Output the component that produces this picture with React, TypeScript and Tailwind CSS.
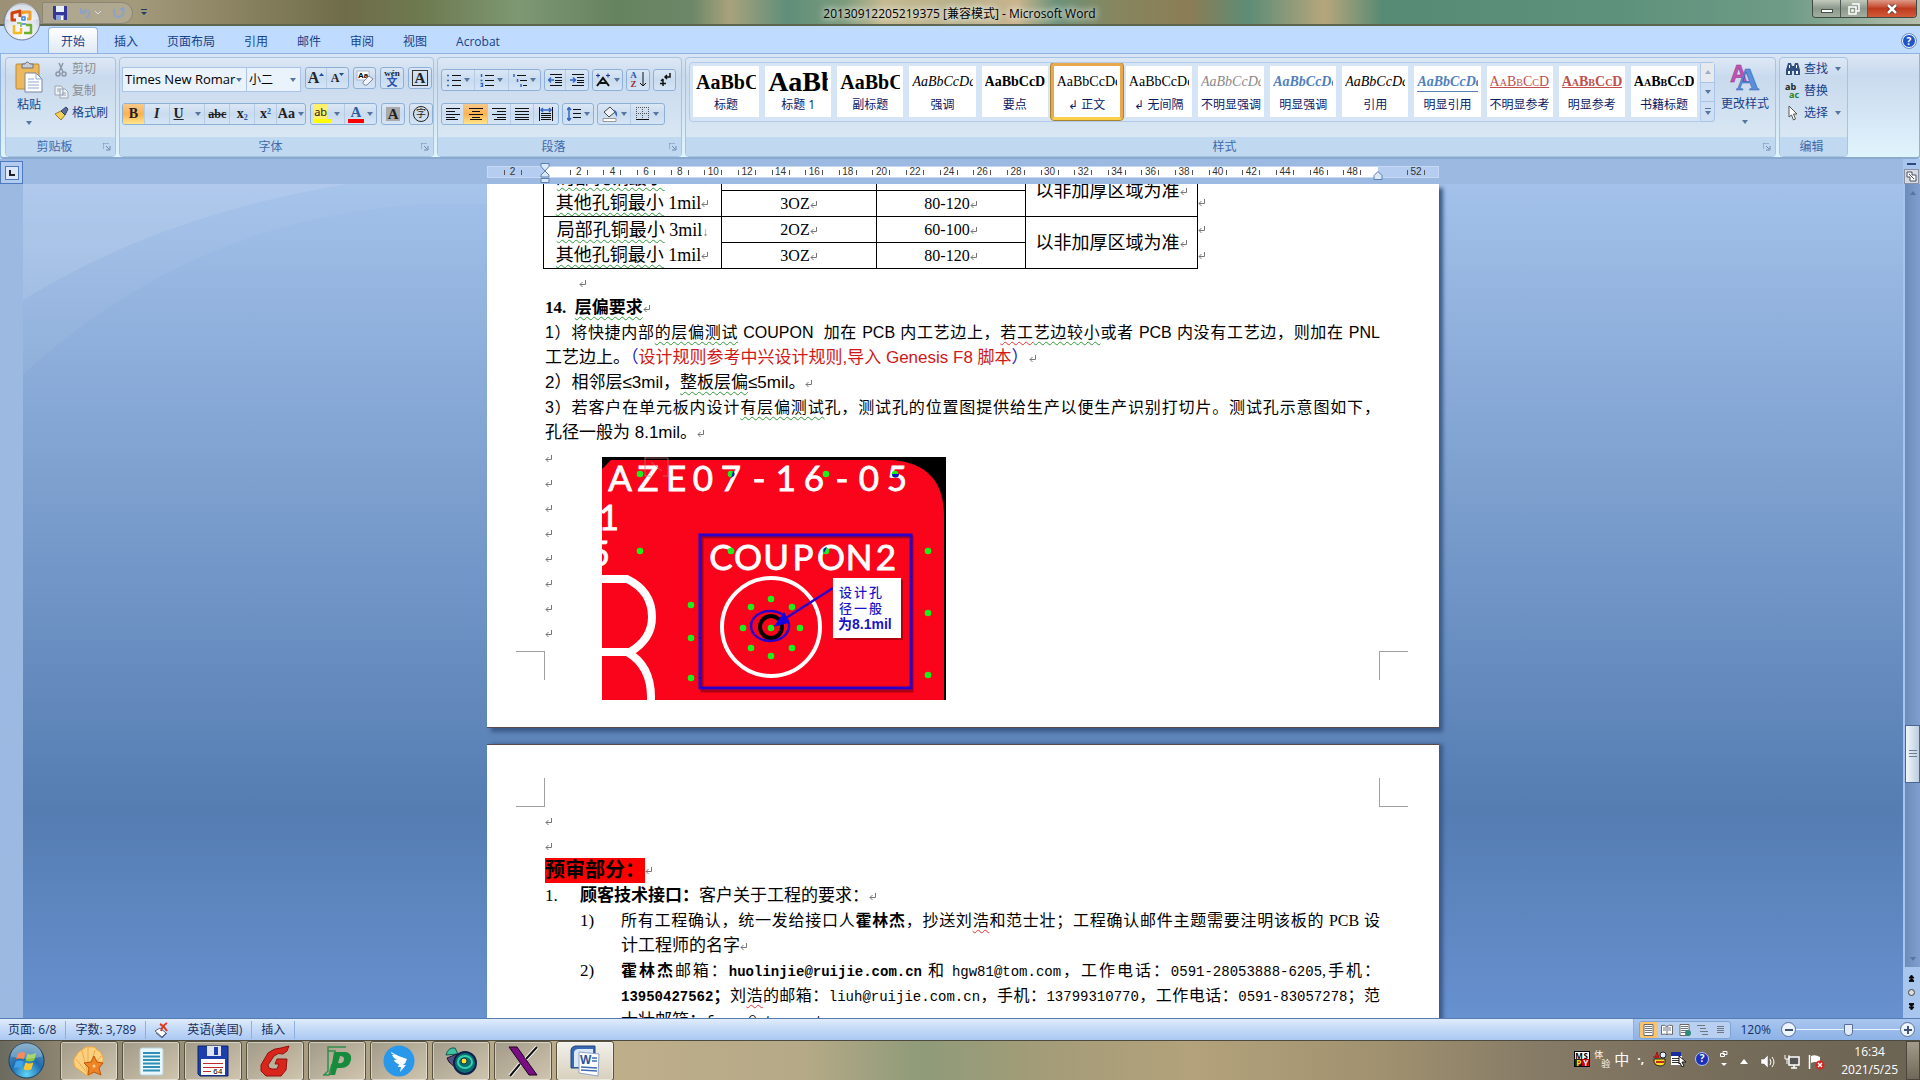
import { useState } from "react";
import type { ReactNode } from "react";
import clsx from "clsx";

const tabs = ["开始", "插入", "页面布局", "引用", "邮件", "审阅", "视图", "Acrobat"];

const styleItems = [
  { name: "标题", sample: "AaBbC", cls: "text-xl font-bold text-black" },
  { name: "标题 1", sample: "AaBb", cls: "text-[28px] font-bold text-black" },
  { name: "副标题", sample: "AaBbC", cls: "text-xl font-bold text-black" },
  { name: "强调", sample: "AaBbCcDd", cls: "text-sm italic text-black" },
  { name: "要点", sample: "AaBbCcD", cls: "text-sm font-bold text-black" },
  { name: "↲ 正文", sample: "AaBbCcDd", cls: "text-sm text-black" },
  { name: "↲ 无间隔", sample: "AaBbCcDd", cls: "text-sm text-black" },
  { name: "不明显强调", sample: "AaBbCcDd", cls: "text-sm italic text-[#8a8a8a]" },
  { name: "明显强调", sample: "AaBbCcDd", cls: "text-sm italic font-bold text-[#4f81bd]" },
  { name: "引用", sample: "AaBbCcDd", cls: "text-sm italic text-black" },
  { name: "明显引用", sample: "AaBbCcDd", cls: "text-sm italic font-bold text-[#4f81bd] border-b border-[#4f81bd]" },
  { name: "不明显参考", sample: "AaBbCcD", cls: "text-sm text-[#c0504d] underline [font-variant:small-caps]" },
  { name: "明显参考", sample: "AaBbCcD", cls: "text-sm font-bold text-[#c0504d] underline [font-variant:small-caps]" },
  { name: "书籍标题", sample: "AaBbCcD", cls: "text-sm font-bold text-black [font-variant:small-caps]" },
];

const rulerNumbers = Array.from({ length: 24 }, (_, i) => (i + 1) * 2);

function Caret({ className }: { className?: string }) {
  return (
    <svg viewBox="0 0 6 4" className={clsx("h-1 w-[6px] shrink-0", className)}>
      <path d="M0 0h6L3 4z" fill="#56759f" />
    </svg>
  );
}

function Mark() {
  return (
    <svg viewBox="0 0 8 8" className="inline-block size-2 shrink-0">
      <path d="M6.5 0v4.5H1M3.5 2L1 4.5 3.5 7" fill="none" stroke="#777" />
    </svg>
  );
}

/* ---------- Title bar ---------- */

function OfficeOrb() {
  return (
    <button aria-label="Office" className="absolute left-[3px] top-[3px] z-10 size-[38px] rounded-full">
      <svg viewBox="0 0 38 38" className="size-full">
        <defs>
          <radialGradient id="orb" cx="50%" cy="80%" r="80%">
            <stop offset="0" stopColor="#fff" />
            <stop offset="0.55" stopColor="#dfe5ee" />
            <stop offset="1" stopColor="#a9b7cc" />
          </radialGradient>
        </defs>
        <circle cx="19" cy="19" r="18" fill="url(#orb)" stroke="#6c7a90" />
        <path d="M3 16a16 16 0 0 1 32 0q-16 6-32 0z" fill="#fff" opacity="0.5" />
        <g fill="none" strokeWidth="2.5" strokeLinejoin="round">
          <path d="M13 17H9V10l8-2v6" stroke="#d2410e" strokeWidth="3" />
          <path d="M20 11v-2h7v7h-3" stroke="#f0a02a" strokeWidth="3" />
          <path d="M11 22v8h7v-5" stroke="#f5b921" />
          <path d="M21 30h7v-8h-5" stroke="#6fae2e" />
          <path d="M19 14h3v3h-3zM19 21h4" stroke="#3c86d8" strokeWidth="1.5" />
          <path d="M14 20h4v4" stroke="#7ab32f" strokeWidth="1.5" />
        </g>
      </svg>
    </button>
  );
}

function SaveIcon() {
  return (
    <svg viewBox="0 0 14 14" className="size-[14px]">
      <path d="M0 0h14v14H2L0 12z" fill="#35359b" />
      <path d="M3 0h8v6H3z" fill="#e8f1fb" />
      <path d="M3 9h8v5H3z" fill="#8f9fd8" />
      <path d="M8 10h2v4H8z" fill="#fff" />
    </svg>
  );
}

function TitleBar() {
  return (
    <header className="flex h-[26px] shrink-0 items-start border-b-2 border-[#5d6450] bg-[linear-gradient(90deg,#9c9076_0%,#a39a7c_7%,#8c8462_12%,#6f6c4a_18%,#6e7a50_22%,#7d9873_27%,#66835f_32%,#6b8767_36%,#a8a27c_38%,#5f8e7a_41%,#7c9b7c_44%,#c5b990_46%,#b6b08a_50%,#c9b48d_53%,#6b9279_55%,#86865f_58%,#8b7d55_62%,#5c8c76_65%,#b7a67c_69%,#578a74_72%,#5f927c_85%,#6e9b86_93%,#b5bfae_100%)]">
      <div className="ml-[42px] mt-[2px] flex h-[22px] w-[91px] items-center gap-3 rounded-r-full border border-[#8b8774] bg-[#b9b29c]/60 pl-[10px]">
        <button aria-label="保存">
          <SaveIcon />
        </button>
        <button aria-label="撤消" className="flex items-center gap-1">
          <svg viewBox="0 0 12 12" className="size-3">
            <path d="M2 1v5h5M2 6q5-5 8-1 1 4-3 6" fill="none" stroke="#8fa2c4" strokeWidth="2" />
          </svg>
          <svg viewBox="0 0 6 4" className="h-1 w-[6px]">
            <path d="M0 0l3 3 3-3" fill="none" stroke="#dfe2e6" />
          </svg>
        </button>
        <button aria-label="恢复">
          <svg viewBox="0 0 12 12" className="size-3">
            <path d="M2 2q-3 8 4 8 6-1 4-8M7 3l3-2 2 3" fill="none" stroke="#8fa2c4" strokeWidth="2" />
          </svg>
        </button>
      </div>
      <button aria-label="自定义快速访问工具栏" className="ml-2 mt-[9px]">
        <svg viewBox="0 0 6 7" className="h-[7px] w-[6px]">
          <path d="M0 0h6v1H0zM0 3h6L3 6z" fill="#20406b" />
        </svg>
      </button>
      <h1 className="flex-1 pr-10 pt-[5px] text-center text-xs leading-[18px] text-black [text-shadow:0_0_6px_#fff,0_0_10px_#fff]">
        20130912205219375 [兼容模式] - Microsoft Word
      </h1>
      <div className="mr-[3px] flex h-[18px] overflow-hidden rounded-b border border-t-0 border-[#3e4a44] text-white">
        <button aria-label="最小化" className="flex w-7 items-end justify-center border-r border-[#4d5a52] bg-linear-to-b from-[#c2cabd] via-[#8b988b] to-[#a4ae9f] pb-1">
          <span className="h-1 w-3 border border-[#45514b] bg-white"></span>
        </button>
        <button aria-label="还原" className="flex w-[27px] items-center justify-center border-r border-[#4d5a52] bg-linear-to-b from-[#c2cabd] via-[#8b988b] to-[#a4ae9f]">
          <svg viewBox="0 0 12 12" className="size-3">
            <path d="M4 1h7v7H8M1 4h7v7H1zM4 7h1v1H4z" fill="none" stroke="#fff" strokeWidth="1.5" />
          </svg>
        </button>
        <button aria-label="关闭" className="flex w-12 items-center justify-center bg-linear-to-b from-[#dd9a87] via-[#bf3a1e] to-[#d35a38]">
          <svg viewBox="0 0 12 10" className="h-[10px] w-3">
            <path d="M2 1l8 8M10 1L2 9" stroke="#4b2a22" strokeWidth="4" />
            <path d="M2 1l8 8M10 1L2 9" stroke="#fff" strokeWidth="2.5" />
          </svg>
        </button>
      </div>
    </header>
  );
}

function TabRow({ active, onSelect }: { active: string; onSelect: (t: string) => void }) {
  return (
    <nav className="flex h-[27px] shrink-0 items-end bg-[#bfdbff] pl-[48px] pr-1">
      {tabs.map((tab) => (
        <button
          key={tab}
          onClick={() => onSelect(tab)}
          className={clsx(
            "mr-[3px] h-[26px] rounded-t border border-b-0 px-3 pt-[2px] text-xs leading-5 text-[#15428b]",
            tab === active ? "border-[#8db2e3] bg-linear-to-b from-white to-[#dfe9f5]" : "border-transparent",
          )}
        >
          {tab}
        </button>
      ))}
      <button aria-label="帮助" className="mb-[5px] ml-auto flex size-[14px] items-center justify-center rounded-full border border-white bg-[#1f55c4] text-[10px] font-bold text-white outline outline-[#6c8fc7]">
        ?
      </button>
    </nav>
  );
}

/* ---------- Ribbon ---------- */

function Group({ title, launcher, className, children }: { title: string; launcher?: boolean; className?: string; children: ReactNode }) {
  return (
    <section
      className={clsx(
        "flex h-[100px] flex-col overflow-hidden rounded border border-[#a5c3e3] bg-linear-to-b from-[#dde8f5] from-0% via-[#c9daee] via-20% to-[#d9e7f3] to-80%",
        className,
      )}
    >
      <div className="min-h-0 flex-1">{children}</div>
      <div className="flex h-[19px] items-center bg-[#c1d9f0] pr-1 text-xs text-[#3e6aaa]">
        <h2 className="flex-1 text-center">{title}</h2>
        {launcher && (
          <button aria-label={title + "选项"}>
            <svg viewBox="0 0 8 8" className="size-2">
              <path d="M0 6V0h6M3 3l3 3M7 3v4H3" fill="none" stroke="#6c89ad" />
            </svg>
          </button>
        )}
      </div>
    </section>
  );
}

function ButtonBox({ children }: { children: ReactNode }) {
  return (
    <div className="flex h-[22px] divide-x divide-[#b5cbe6] overflow-hidden rounded-[3px] border border-[#8fb0d6] bg-linear-to-b from-[#dbe7f5] via-[#c9dbef] to-[#d5e5f6]">
      {children}
    </div>
  );
}

function Tool({ label, caret, on, className, children }: { label: string; caret?: boolean; on?: boolean; className: string; children: ReactNode }) {
  return (
    <button
      aria-label={label}
      className={clsx(
        "flex items-center justify-center font-['Liberation_Serif','Noto_Sans_CJK_SC',serif] text-[#222]",
        on && "bg-linear-to-b from-[#f8c98a] via-[#fbb24e] to-[#ffe58a]",
        className,
      )}
    >
      {children}
      {caret && <Caret className="ml-[3px]" />}
    </button>
  );
}

function ClipboardGroup() {
  return (
    <Group title="剪贴板" launcher className="w-[111px]">
      <div className="flex pl-[6px]">
        <button className="flex w-[34px] flex-col items-center pt-[3px] text-xs text-[#15428b]">
          <svg viewBox="0 0 28 32" className="h-8 w-7">
            <rect x="1" y="3" width="23" height="25" rx="1" fill="#edb85a" stroke="#b98a3c" />
            <path d="M7 3h3q2-4 5 0h3v4H7z" fill="#c9ccd2" stroke="#6f7278" />
            <path d="M10 12h11l6 6v13H10z" fill="#fff" stroke="#7787a0" />
            <path d="M21 12v6h6M13 18h6M13 21h11M13 24h11M13 27h11" fill="none" stroke="#8fa9cf" />
          </svg>
          <span className="mt-1 leading-4">粘贴</span>
          <Caret className="mt-2" />
        </button>
        <div className="ml-2 flex flex-col text-xs leading-[22px]">
          <button className="flex items-center gap-[3px] text-[#8d8d8d]">
            <svg viewBox="0 0 15 15" className="size-[15px]">
              <path d="M5 1l4 9M9 1L5 10" stroke="#8b97a8" strokeWidth="1.5" />
              <circle cx="4" cy="12" r="2" fill="none" stroke="#8b97a8" strokeWidth="1.5" />
              <circle cx="10" cy="12" r="2" fill="none" stroke="#8b97a8" strokeWidth="1.5" />
            </svg>
            剪切
          </button>
          <button className="flex items-center gap-[3px] text-[#8d8d8d]">
            <svg viewBox="0 0 15 15" className="size-[15px]">
              <path d="M1 2h6l2 2v7H1zM6 5h5l3 3v6H6z" fill="#eef1f5" stroke="#9aa5b5" />
              <path d="M3 5h3M3 7h3M8 9h4M8 11h4" stroke="#9aa5b5" />
            </svg>
            复制
          </button>
          <button className="flex items-center gap-[3px] text-[#15428b]">
            <svg viewBox="0 0 15 15" className="size-[15px]">
              <path d="M1 8l6-3 4 4-4 5z" fill="#f2cf57" stroke="#9a7b2a" />
              <path d="M7 5l4 4 3-6-2-2z" fill="#5b6c97" stroke="#33406a" />
            </svg>
            格式刷
          </button>
        </div>
      </div>
    </Group>
  );
}

function FontGroup() {
  return (
    <Group title="字体" launcher className="w-[315px]">
      <div className="flex flex-col gap-[11px] pl-[2px] pt-[9px]">
        <div className="flex h-[25px] items-start">
          <div className="flex h-[25px] w-[125px] items-center border border-[#a9c4e6] bg-[#eaf2fb] pr-1">
            <input aria-label="字体" defaultValue="Times New Romar" className="w-full min-w-0 pl-[2px] text-[13px] outline-none" />
            <Caret />
          </div>
          <div className="flex h-[25px] w-[54px] items-center border border-l-0 border-[#a9c4e6] bg-[#eaf2fb] pr-1">
            <input aria-label="字号" defaultValue="小二" className="w-full min-w-0 pl-[2px] text-xs outline-none" />
            <Caret />
          </div>
          <div className="ml-1 flex gap-1">
            <ButtonBox>
              <Tool label="增大字体" className="w-[21px] text-base font-bold">
                A
                <svg viewBox="0 0 5 3" className="mb-2 h-[3px] w-[5px]">
                  <path d="M0 3h5L2.500 0z" fill="#1f4e9e" />
                </svg>
              </Tool>
              <Tool label="缩小字体" className="w-[21px] text-xs font-bold">
                A
                <svg viewBox="0 0 5 3" className="mb-2 h-[3px] w-[5px]">
                  <path d="M0 0h5L2.500 3z" fill="#1f4e9e" />
                </svg>
              </Tool>
            </ButtonBox>
            <ButtonBox>
              <Tool label="清除格式" className="w-[21px]">
                <svg viewBox="0 0 18 18" className="size-[18px]">
                  <rect x="1" y="2" width="12" height="9" fill="#fff" stroke="#aab6c8" />
                  <text x="2" y="9" fontSize="8" fontWeight="bold" fontFamily="Liberation Sans">Aa</text>
                  <path d="M7 13l6-6 4 3-6 6q-4 1-4-3z" fill="#f3f4f8" stroke="#7b86a0" />
                </svg>
              </Tool>
            </ButtonBox>
            <ButtonBox>
              <Tool label="拼音指南" className="w-[22px] flex-col">
                <span className="text-[9px] leading-[8px] font-bold">wén</span>
                <span className="text-[11px] leading-[11px] font-bold text-[#2a52b5]">文</span>
              </Tool>
            </ButtonBox>
            <ButtonBox>
              <Tool label="字符边框" className="w-[22px]">
                <span className="size-4 border border-[#333] text-center text-[15px] leading-[15px] font-bold">A</span>
              </Tool>
            </ButtonBox>
          </div>
        </div>
        <div className="flex gap-1">
          <ButtonBox>
            <Tool label="加粗" on className="w-[22px] text-sm font-black">B</Tool>
            <Tool label="倾斜" className="w-[25px] text-sm font-bold italic">I</Tool>
            <Tool label="下划线" caret className="w-9 gap-2 text-sm font-bold">
              <u>U</u>
            </Tool>
            <Tool label="删除线" className="w-[25px] text-xs font-bold line-through">abc</Tool>
            <Tool label="下标" className="w-[25px] text-sm font-bold">
              <span>x<sub className="text-[8px] text-[#2a52b5]">2</sub></span>
            </Tool>
            <Tool label="上标" className="w-[22px] text-sm font-bold">
              <span>x<sup className="text-[8px] text-[#2a52b5]">2</sup></span>
            </Tool>
            <Tool label="更改大小写" caret className="w-7 text-sm font-bold">Aa</Tool>
          </ButtonBox>
          <ButtonBox>
            <Tool label="突出显示" caret className="w-[34px]">
              <span className="w-[17px] border-b-4 border-[#ff0] text-left text-[11px] leading-[13px]">
                <span className="bg-[#ffef6a] font-sans">ab</span>
              </span>
            </Tool>
            <Tool label="字体颜色" caret className="w-[32px]">
              <span className="w-4 border-b-4 border-[#f00] text-center text-[15px] leading-[13px] font-bold text-[#2f5a9c]">A</span>
            </Tool>
          </ButtonBox>
          <ButtonBox>
            <Tool label="字符底纹" className="w-[22px]">
              <span className="size-[14px] bg-[#a9a9a9] text-center text-[15px] leading-[14px] font-bold">A</span>
            </Tool>
          </ButtonBox>
          <ButtonBox>
            <Tool label="带圈字符" className="w-[22px]">
              <span className="size-4 rounded-full border border-[#222] text-center text-[10px] leading-[14px]">字</span>
            </Tool>
          </ButtonBox>
        </div>
      </div>
    </Group>
  );
}

function LineIcon({ d, accent }: { d: string; accent?: string }) {
  return (
    <svg viewBox="0 0 14 14" className="size-[14px] shrink-0">
      <path d={d} stroke="#111" fill="none" />
      {accent && <path d={accent} stroke="#3566c4" strokeWidth="1.5" fill="none" />}
    </svg>
  );
}

function ParagraphGroup() {
  return (
    <Group title="段落" launcher className="w-[245px]">
      <div className="flex flex-col gap-3 pl-[3px] pt-[11px]">
        <div className="flex gap-[3px]">
          <ButtonBox>
            <Tool label="项目符号" caret className="w-[33px]">
              <LineIcon d="M5 2.5h9M5 7.5h9M5 12.5h9" accent="M0 2.5h2M0 7.5h2M0 12.5h2" />
            </Tool>
            <Tool label="编号" caret className="w-[34px]">
              <LineIcon d="M5 2.5h9M5 7.5h9M5 12.5h9" accent="M1.5 1v3M.5 7.5h2M.5 10.5h2v3h-2" />
            </Tool>
            <Tool label="多级列表" caret className="w-[31px]">
              <LineIcon d="M4 2.5h9M7 7.5h7M10 12.5h4" accent="M1 1v3M4.5 6v3M8 11v3" />
            </Tool>
          </ButtonBox>
          <ButtonBox>
            <Tool label="减少缩进量" className="w-[21px]">
              <LineIcon d="M2 1.5h12M7 4.5h7M7 7.5h7M7 9.5h7M2 12.5h12" accent="M0 7h6M3 4.5L0.5 7 3 9.5" />
            </Tool>
            <Tool label="增加缩进量" className="w-[22px]">
              <LineIcon d="M2 1.5h12M7 4.5h7M7 7.5h7M7 9.5h7M2 12.5h12" accent="M0 7h6M3 4.5L5.5 7 3 9.5" />
            </Tool>
          </ButtonBox>
          <ButtonBox>
            <Tool label="中文版式" caret className="w-[29px]">
              <svg viewBox="0 0 16 14" className="h-[14px] w-4 shrink-0">
                <path d="M2 13l6-8 6 8M5 10h6" fill="none" stroke="#111" strokeWidth="2" />
                <path d="M1 2.5h4M3 .5v4M11 2.5h4M13 .5v4" stroke="#1c2f92" />
              </svg>
            </Tool>
          </ButtonBox>
          <ButtonBox>
            <Tool label="排序" className="w-[22px] gap-[3px]">
              <span className="flex flex-col text-[9px] leading-[9px] font-bold text-[#2b50a8]">
                <span>A</span>
                <span className="text-[#a02c2c]">Z</span>
              </span>
              <svg viewBox="0 0 6 16" className="h-4 w-[6px]">
                <path d="M3 0v14M0 11l3 3 3-3" fill="none" stroke="#111" />
              </svg>
            </Tool>
          </ButtonBox>
          <ButtonBox>
            <Tool label="显示编辑标记" className="w-[21px]">
              <svg viewBox="0 0 14 14" className="size-[14px]">
                <path d="M12 0v4H7M9 2L7 4l2 2M5 6v7M2 10.500h6M3 8l2-2" fill="none" stroke="#111" strokeWidth="1.500" />
              </svg>
            </Tool>
          </ButtonBox>
        </div>
        <div className="flex gap-[3px]">
          <ButtonBox>
            <Tool label="左对齐" className="w-[22px]">
              <LineIcon d="M0 1.5h14M0 4.500h9M0 7.500h14M0 10.500h9M0 12.500h12" />
            </Tool>
            <Tool label="居中" on className="w-6">
              <LineIcon d="M0 1.5h14M3 4.500h8M0 7.500h14M3 10.500h8M1 12.500h12" />
            </Tool>
            <Tool label="右对齐" className="w-[23px]">
              <LineIcon d="M0 1.5h14M5 4.500h9M0 7.500h14M5 10.500h9M2 12.500h12" />
            </Tool>
            <Tool label="两端对齐" className="w-[23px]">
              <LineIcon d="M0 1.5h14M0 4.500h14M0 7.500h14M0 10.500h14M0 12.500h14" />
            </Tool>
            <Tool label="分散对齐" className="w-[24px]">
              <LineIcon d="M.5 0v14M13.5 0v14M2 6.500h10M2 8.500h10M2 10.500h10M2 12.500h10" accent="M2 3h10M4 1L2 3l2 2M10 1l2 2-2 2" />
            </Tool>
          </ButtonBox>
          <ButtonBox>
            <Tool label="行距" caret className="w-[30px]">
              <LineIcon d="M6 2.500h8M6 6.500h8M6 10.500h8" accent="M2 1v12M0 3l2-2.500L4 3M0 11l2 2.500L4 11" />
            </Tool>
          </ButtonBox>
          <ButtonBox>
            <Tool label="底纹" caret className="w-[33px]">
              <svg viewBox="0 0 16 16" className="size-4">
                <path d="M2 6l6-5 5 5-6 5z" fill="#eef2f8" stroke="#444" />
                <path d="M12 4q4 1 3 7l-2-3z" fill="#3a6cc8" />
                <path d="M1 12.500h13v3H1z" fill="#fff" stroke="#999" />
              </svg>
            </Tool>
            <Tool label="边框" caret className="w-[33px]">
              <svg viewBox="0 0 14 14" className="size-[14px]">
                <path d="M.5 0v13M6.500 0v13M12.500 0v13M0 .5h13M0 6.500h13" stroke="#555" strokeDasharray="1 1" />
                <path d="M0 12.500h13" stroke="#111" />
              </svg>
            </Tool>
          </ButtonBox>
        </div>
      </div>
    </Group>
  );
}

function StylesGroup() {
  const [selected, setSelected] = useState(5);
  return (
    <Group title="样式" launcher className="min-w-0 flex-1">
      <div className="flex pl-[3px] pt-1">
        <div className="flex h-[60px] min-w-0 flex-1 justify-between overflow-hidden rounded-l border border-[#b3cbe8] bg-[#d6e5f6]">
          {styleItems.map((item, i) => (
            <button
              key={item.name}
              onClick={() => setSelected(i)}
              className={clsx(
                "flex h-[57px] min-w-0 flex-1 flex-col rounded-[3px] border-[3px]",
                i === selected ? "border-[#e9a84c] border-b-[#fbcf4a] outline outline-[#a8842f]" : "border-transparent",
              )}
            >
              <span className="flex w-full flex-1 flex-col bg-white">
                <span
                  className={clsx(
                    "mx-[3px] mt-1 block h-[22px] shrink-0 overflow-hidden text-left font-['Liberation_Serif',serif] leading-6 whitespace-nowrap",
                    item.cls,
                  )}
                >
                  {item.sample}
                </span>
                <span className="mt-1 block w-full text-center text-xs leading-[18px] whitespace-nowrap text-[#0b1a66]">{item.name}</span>
              </span>
            </button>
          ))}
        </div>
        <div className="flex h-[60px] w-[14px] flex-col divide-y divide-[#a9c4e6] rounded-r border border-l-0 border-[#a9c4e6] bg-[#cfe0f4]">
          <button aria-label="上一行" className="flex flex-1 items-center justify-center bg-[#e6e9ee]">
            <Caret className="rotate-180 opacity-50" />
          </button>
          <button aria-label="下一行" className="flex flex-1 items-center justify-center">
            <Caret />
          </button>
          <button aria-label="其他" className="flex flex-1 flex-col items-center justify-center gap-[2px]">
            <span className="h-px w-[6px] bg-[#56759f]"></span>
            <Caret />
          </button>
        </div>
        <button className="flex w-[60px] flex-col items-center text-xs text-[#15428b]">
          <svg viewBox="0 0 30 30" className="h-[30px] w-[30px]">
            <text x="0" y="20" fontSize="24" fontWeight="bold" fontFamily="Liberation Sans" fill="#c252b4" stroke="#8d2f86" strokeWidth="0.5">A</text>
            <text x="6" y="28" fontSize="32" fontWeight="bold" fontFamily="Liberation Serif" fill="#5b8fdb" stroke="#2c5aa8" strokeWidth="0.5">A</text>
          </svg>
          <span className="mt-1 leading-4">更改样式</span>
          <Caret className="mt-2" />
        </button>
      </div>
    </Group>
  );
}

function EditGroup() {
  return (
    <Group title="编辑" className="w-[69px]">
      <div className="flex flex-col pl-[5px] text-xs leading-[22px] text-[#15428b]">
        <button className="flex h-[22px] items-center gap-[3px]">
          <svg viewBox="0 0 16 14" className="h-[14px] w-4">
            <path d="M1 8l2-7h3l1 3h2l1-3h3l2 7v5H9V9H7v4H1z" fill="#324d80" />
            <path d="M3 9h2v3H3zM11 9h2v3h-2zM4 3h1v3H4zM11 3h1v3h-1z" fill="#fff" />
          </svg>
          查找
          <Caret className="ml-1" />
        </button>
        <button className="flex h-[22px] items-center gap-[3px]">
          <span className="flex w-4 flex-col text-left text-[9px] leading-[8px] font-bold text-[#222]">
            <span>ab</span>
            <span className="pl-1 text-[#22842a]">ac</span>
          </span>
          替换
        </button>
        <button className="flex h-[22px] items-center gap-[3px]">
          <svg viewBox="0 0 16 16" className="size-4">
            <path d="M4 1l8 8H8.500l2 5-2 1-2-5L4 12z" fill="#fff" stroke="#555" />
          </svg>
          选择
          <Caret className="ml-1" />
        </button>
      </div>
    </Group>
  );
}

function Ribbon() {
  return (
    <div className="flex h-[106px] shrink-0 items-start gap-[3px] rounded-b border border-b-2 border-[#8db2e3] border-b-[#8aa9cf] bg-linear-to-b from-[#dbe6f4] from-0% via-[#c9daee] via-20% to-[#e0f4fd] pl-1 pr-[71px] pt-[3px]">
      <ClipboardGroup />
      <FontGroup />
      <ParagraphGroup />
      <StylesGroup />
      <EditGroup />
    </div>
  );
}

/* ---------- Ruler ---------- */

function RulerCell({ n, className }: { n: ReactNode; className?: string }) {
  return (
    <div className={clsx("flex items-center justify-center", className)}>
      <i className="h-[5px] w-px bg-[#555]"></i>
      <span className="w-4 text-center">{n}</span>
      <i className="h-[5px] w-px bg-[#555]"></i>
    </div>
  );
}

function Ruler() {
  return (
    <div className="flex h-[25px] shrink-0 bg-[#9bb9e1]">
      <button aria-label="制表符" className="mt-[2px] flex size-[23px] shrink-0 items-center justify-center border border-[#4f79c0] bg-[#b3cbee]">
        <span className="flex size-[14px] items-center justify-center border border-[#4f79c0] bg-[#dce8f8]">
          <svg viewBox="0 0 6 6" className="size-[6px]">
            <path d="M1 0v5h5" fill="none" stroke="#222" strokeWidth="2" />
          </svg>
        </span>
      </button>
      <div className="flex flex-1 justify-center pt-[7px]">
        <div className="relative flex h-3 w-[952px] shrink-0 border border-[#c7d9f2] bg-[#b4cdf0] font-['Liberation_Sans',sans-serif] text-[10px] leading-[10px] text-[#333]">
          <RulerCell n="2" className="w-[57px] pr-2" />
          <div className="flex h-full w-[833px] bg-white pl-[17px] pr-[9px]">
            {rulerNumbers.map((n) => (
              <RulerCell key={n} n={n} className="min-w-0 flex-1" />
            ))}
          </div>
          <RulerCell n="52" className="ml-5 w-9" />
          <svg viewBox="0 0 10 20" className="absolute -top-1 left-[52px] h-5 w-[10px]">
            <path d="M1 .5h8v3L5 8 1 3.500zM5 8l4 4v2H1v-2zM1 15.500h8v4H1z" fill="#dbe8fa" stroke="#5d7fae" />
          </svg>
          <svg viewBox="0 0 10 10" className="absolute left-[885px] top-1 size-[10px]">
            <path d="M5 .5l4 4v4H1v-4z" fill="#dbe8fa" stroke="#5d7fae" />
          </svg>
        </div>
      </div>
    </div>
  );
}

/* ---------- Document ---------- */

function Wave({ red, children }: { red?: boolean; children: ReactNode }) {
  return (
    <span className={clsx("underline decoration-wavy decoration-1 underline-offset-[3px]", red ? "decoration-[#e03030]" : "decoration-[#2f9a3a]")}>
      {children}
    </span>
  );
}

function Line({ full, className, children }: { full?: boolean; className?: string; children: ReactNode }) {
  return (
    <p className={clsx("min-h-[25px] whitespace-nowrap", full ? "text-base leading-[25px] [text-align-last:justify]" : "text-[17px] leading-[25px]", className)}>
      {children}
    </p>
  );
}

function Mono({ children }: { children: ReactNode }) {
  return <span className="font-['Liberation_Mono',monospace] text-sm">{children}</span>;
}

function CopperTable() {
  const cell = "border border-black p-0 text-center align-middle";
  return (
    <div className="-ml-[2px] -mt-[20px] mb-px flex">
      <table className="w-[654px] table-fixed border-collapse font-['Liberation_Serif','Noto_Sans_CJK_SC',serif] text-base leading-[25px]">
        <colgroup>
          <col className="w-[178px]" />
          <col className="w-[155px]" />
          <col className="w-[149px]" />
          <col className="w-[172px]" />
        </colgroup>
        <tbody>
          {["其他孔铜最小", "局部孔铜最小"].map((first, i) => [
            <tr key={first} className="h-[26px]">
              <td rowSpan={2} className={clsx(cell, "text-lg leading-[25px] whitespace-nowrap")}>
                <Wave>局部孔铜最小</Wave> 3mil<span className="text-xs text-[#777]">↓</span>
                <br />
                <Wave>其他孔铜最小</Wave> 1mil
                <Mark />
              </td>
              <td className={cell}>2OZ<Mark /></td>
              <td className={cell}>60-100<Mark /></td>
              <td rowSpan={2} className={clsx(cell, "text-lg whitespace-nowrap")}>
                以非加厚区域为准
                <Mark />
              </td>
            </tr>,
            <tr key={first + i} className="h-[26px]">
              <td className={cell}>3OZ<Mark /></td>
              <td className={cell}>80-120<Mark /></td>
            </tr>,
          ])}
        </tbody>
      </table>
      <div className="flex flex-col justify-around">
        <Mark />
        <Mark />
        <Mark />
        <Mark />
      </div>
    </div>
  );
}

const greenDots = [
  [38, 17], [129, 17], [224, 17], [293, 17], [38, 94], [129, 94], [224, 94], [326, 94], [89, 148], [89, 181], [89, 221],
  [326, 156], [326, 218], [169, 142], [149, 150], [190, 150], [141, 171], [169, 171], [198, 171], [149, 191], [190, 191], [169, 199],
];

function BoardPicture() {
  return (
    <svg viewBox="0 0 344 243" className="ml-[49px] mt-3 h-[243px] w-[344px]">
      <rect width="344" height="243" fill="#000" />
      <path d="M0 12L9 3h281q52 4 52 56v184H0z" fill="#f9041b" />
      <g fill="#fff" stroke="#fff" strokeWidth="0.8" fontFamily="Lato, sans-serif" fontSize="35" textAnchor="middle">
        <text x="18 46 74 101 129 157 184 212 240 267 295" y="34">AZE07-16-05</text>
        <text x="7" y="73">1</text>
        <text x="-2" y="109">5</text>
        <text x="119 146 174 201 229 257 284" y="113">COUPON2</text>
      </g>
      <g fill="none" stroke="#fff">
        <path d="M0 122h25q25 12 25 38 0 22-22 35H0M25 195q25 14 24 48" strokeWidth="8" />
        <circle cx="169" cy="170" r="49" strokeWidth="4" />
      </g>
      <path d="M43 0v19h6M43 1h23v18h-5M49 5l11 9" fill="none" stroke="#b77" strokeWidth="0.700" />
      <rect x="100" y="80" width="210" height="154" fill="none" stroke="#8f0010" strokeWidth="3" opacity="0.7" />
      <rect x="98" y="78" width="211" height="153" fill="none" stroke="#2a00c8" strokeWidth="3" />
      <circle cx="169" cy="170" r="11" fill="none" stroke="#000" strokeWidth="4" />
      <ellipse cx="168" cy="169" rx="19" ry="15" fill="none" stroke="#2a00c8" strokeWidth="2.500" />
      <g fill="#1cf01c">
        {greenDots.map(([x, y]) => (
          <circle key={x + "-" + y} cx={x} cy={y} r="3.300" />
        ))}
      </g>
      <path d="M131 14q4 4-2 7zM225 90q-5 1-3 6zM290 17a3.500 3.500 0 0 0 7 0z" fill="#1712c8" />
      <path d="M231 131l-47 30" stroke="#2a00c8" strokeWidth="2.500" />
      <path d="M174 168l8-11 4 8z" fill="#1400e0" stroke="#1400e0" strokeWidth="2" />
      <rect x="233" y="123" width="68" height="60" fill="#600" opacity="0.5" />
      <rect x="231" y="121" width="68" height="60" fill="#fff" />
      <g fill="#1b14c4" stroke="none" fontSize="14" fontWeight="bold" fontFamily="'Liberation Sans', 'Noto Sans CJK SC', sans-serif">
        <text x="237 252 267" y="140" fontSize="13" fontWeight="500">设计孔</text>
        <text x="237 252 267" y="156" fontSize="13" fontWeight="500">径一般</text>
        <text x="236" y="172">为8.1mil</text>
      </g>
    </svg>
  );
}

function Backdrop() {
  return (
    <svg viewBox="0 0 1880 834" preserveAspectRatio="none" className="absolute inset-0 size-full">
      <path d="M0 0h325Q140 30 0 116z" fill="#fff" opacity="0.1" />
      <path d="M0 0h464v20Q200 10 0 190z" fill="#fff" opacity="0.05" />
    </svg>
  );
}

function Document() {
  return (
    <main className="relative min-w-0 flex-1 overflow-hidden bg-linear-to-b from-[#a3c1ea] from-0% via-[#557db2] via-75% to-[#6791cf]">
      <Backdrop />
      <div className="relative mx-auto flex w-[952px] flex-col gap-4 font-['Liberation_Sans','Noto_Sans_CJK_SC',sans-serif] text-black">
        <article className="relative border-b border-[#5a4a4a] bg-white pb-[27px] pl-[58px] pr-[59px] shadow-[4px_4px_4px_#3b5a8a]">
          <CopperTable />
          <Line className="pl-[34px]"><Mark /></Line>
          <Line className="font-['Liberation_Serif','Noto_Sans_CJK_SC',serif] font-bold">
            14.&nbsp; <Wave>层偏要求</Wave>
            <Mark />
          </Line>
          <Line full>
            1）将快捷内部<Wave>的层偏测试</Wave> COUPON&nbsp; 加在 PCB 内工艺边上，<Wave red>若工</Wave>
            <Wave>艺边较小</Wave>或者 PCB 内没有工艺边，则加在 PNL
          </Line>
          <Line>
            工艺边上。<span className="text-[#1a1ab8]">（</span>
            <span className="text-[#d01818]">设计规则参考中兴设计规则,导入 Genesis F8 脚本</span>
            <span className="text-[#1a1ab8]">）</span>
            <Mark />
          </Line>
          <Line>
            2）相邻层≤3mil，<Wave>整板层偏</Wave>≤5mil。
            <Mark />
          </Line>
          <Line full>
            3）若客户在单元板内设计<Wave>有层偏测试</Wave>孔，测试孔的位置图提供给生产以便生产识别打切片。测试孔示意图如下，
          </Line>
          <Line>
            孔径一般为 8.1mil。
            <Mark />
          </Line>
          <div className="flex items-start">
            <div>
              {Array.from({ length: 8 }, (_, i) => (
                <Line key={i}><Mark /></Line>
              ))}
            </div>
            <BoardPicture />
          </div>
          <span className="absolute bottom-[47px] left-[29px] size-[29px] border-t border-r border-[#a0a0a0]"></span>
          <span className="absolute right-[31px] bottom-[47px] size-[29px] border-t border-l border-[#a0a0a0]"></span>
        </article>

        <article className="relative border-t border-[#5a4a4a] bg-white pl-[58px] pr-[59px] pt-[63px] shadow-[4px_0_4px_#3b5a8a]">
          <span className="absolute left-[29px] top-[33px] size-[29px] border-r border-b border-[#a0a0a0]"></span>
          <span className="absolute right-[31px] top-[33px] size-[29px] border-b border-l border-[#a0a0a0]"></span>
          <Line><Mark /></Line>
          <Line><Mark /></Line>
          <h2 className="flex h-[25px] items-center text-xl leading-[25px] font-bold">
            <span className="bg-[#f00]">预审部分：</span>
            <Mark />
          </h2>
          <ol className="font-['Liberation_Serif','Noto_Sans_CJK_SC',serif]">
            <li className="flex">
              <span className="w-[35px] shrink-0 text-[17px] leading-[25px]">1.</span>
              <Line>
                <b>顾客技术接口：</b>客户关于工程的要求：
                <Mark />
              </Line>
            </li>
            <li className="flex pl-[35px]">
              <span className="w-[41px] shrink-0 text-[17px] leading-[25px]">1)</span>
              <div className="min-w-0 flex-1">
                <Line full>
                  所有工程确认，统一发给接口人<b>霍林杰</b>，抄送刘<Wave red>浩</Wave>和范士壮；工程确认邮件主题需要注明该板的 PCB 设
                </Line>
                <Line>
                  计工程师的名字
                  <Mark />
                </Line>
              </div>
            </li>
            <li className="flex pl-[35px]">
              <span className="w-[41px] shrink-0 text-[17px] leading-[25px]">2)</span>
              <div className="min-w-0 flex-1">
                <Line full>
                  <b>霍林杰</b>邮箱：
                  <b>
                    <Mono>huolinjie@ruijie.com.cn</Mono>
                  </b>{" "}
                  和 <Mono>hgw81@tom.com</Mono>，工作电话：<Mono>0591-28053888-6205</Mono>,手机：
                </Line>
                <Line full>
                  <b>
                    <Mono>13950427562</Mono>；
                  </b>
                  刘<Wave red>浩</Wave>的邮箱：<Mono>liuh@ruijie.com.cn</Mono>，手机：<Mono>13799310770</Mono>，工作电话：<Mono>0591-83057278</Mono>；范
                </Line>
                <Line>
                  士壮邮箱：<Mono>fansz@star-net.cn</Mono>
                </Line>
              </div>
            </li>
          </ol>
        </article>
      </div>
    </main>
  );
}

function ScrollBar() {
  return (
    <div className="flex w-[17px] shrink-0 flex-col bg-[#a9c6ef]">
      <div className="flex h-[25px] flex-col items-center gap-1 pt-1">
        <span className="h-[2px] w-[9px] bg-[#2b4a80]"></span>
        <button aria-label="标尺" className="flex size-[15px] items-center justify-center border border-[#8a93a5] bg-[#d5dae3]">
          <svg viewBox="0 0 11 11" className="size-[11px]">
            <path d="M1 1h5v3h4v6H4V6H1zM3 3l5 5" fill="#fff" stroke="#4a4f60" />
          </svg>
        </button>
      </div>
      <div className="flex min-h-0 flex-1 flex-col items-center border-l-2 border-[#a7c4ee] bg-linear-to-r from-[#6c8cba] to-[#809fcf]">
        <button aria-label="向上滚动" className="flex h-[17px] items-center"><Caret className="rotate-180" /></button>
        <div className="flex-[523]"></div>
        <div className="flex h-[58px] w-[15px] shrink-0 flex-col items-center justify-center gap-[2px] border border-[#4a6693] bg-linear-to-r from-[#f2f6fa] to-[#bccde0]">
          <i className="h-px w-2 bg-[#6b7c93]"></i>
          <i className="h-px w-2 bg-[#6b7c93]"></i>
          <i className="h-px w-2 bg-[#6b7c93]"></i>
        </div>
        <div className="flex-[167]"></div>
        <button aria-label="向下滚动" className="flex h-[17px] items-center"><Caret /></button>
      </div>
      <div className="flex h-[51px] flex-col items-center justify-around bg-[#a9c6ef] py-1">
        <svg viewBox="0 0 7 7" className="size-[7px]"><path d="M3.500 0L6 3H1zM3.500 3L6 6H1zM1 6.500h5" stroke="#111" /></svg>
        <span className="size-[7px] rounded-full border border-[#444] bg-[#ddd]"></span>
        <svg viewBox="0 0 7 7" className="size-[7px]"><path d="M1 .5h5M3.500 4L6 1H1zM3.500 7L6 4H1z" stroke="#111" /></svg>
      </div>
    </div>
  );
}

/* ---------- Status bar and taskbar ---------- */

function StatusBar() {
  const sep = "border-r border-[#8fb0de] h-[18px] flex items-center";
  return (
    <footer className="flex h-[22px] shrink-0 items-center border-t border-[#567db1] bg-linear-to-b from-[#e0ecfb] via-[#c3d9f7] to-[#abc8f2] text-xs text-[#15305f]">
      <span className={clsx(sep, "pl-2 pr-[9px]")}>页面: 6/8</span>
      <span className={clsx(sep, "px-[9px]")}>字数: 3,789</span>
      <button aria-label="校对" className="px-2">
        <svg viewBox="0 0 16 16" className="size-4">
          <path d="M1 9l5-3 6 5-4 4z" fill="#fff" stroke="#56688c" />
          <path d="M2 11l6 5 5-5" fill="none" stroke="#56688c" />
          <path d="M6 2q4 2 7 7M13 1Q8 4 7 9" fill="none" stroke="#e03a1c" strokeWidth="2" />
        </svg>
      </button>
      <span className={clsx(sep, "px-[9px]")}>英语(美国)</span>
      <span className={clsx(sep, "px-[9px]")}>插入</span>
      <div className="ml-auto flex h-full items-center border-l border-[#8fb0de] bg-linear-to-b from-[#a9c6ef] to-[#8db2e6] pl-[5px] pr-[5px]">
        <div className="flex h-[18px] overflow-hidden rounded-[3px] border border-[#7ea3d6] bg-[#b9d0f0]">
          {["页面视图", "阅读版式", "Web 版式", "大纲视图", "普通视图"].map((label, i) => (
            <button key={label} aria-label={label} className={clsx("flex w-[18px] items-center justify-center", i === 0 && "bg-[#fbc36b]")}>
              <svg viewBox="0 0 12 12" className="size-3">
                {i < 3 && <path d={i === 1 ? "M.5 1.500q3-1 5 1 3-2 6-1v9q-3-1-6 0-2-1-5 0zM6 2v9" : "M1 .5h9v11H1z"} fill="#fff" stroke="#6a6a6a" />}
                <path d={i === 1 ? "M2 4h3M2 6h3M7 4h3M7 6h3" : i === 3 ? "M0 1.500h8M3 4.500h6M3 7.500h8M5 10.500h6" : "M2 2.500h7M2 4.500h7M2 6.500h7M2 8.500h7"} stroke="#6f7785" />
                {i === 2 && <circle cx="9" cy="9" r="3" fill="#2b8a78" />}
              </svg>
            </button>
          ))}
        </div>
        <span className="mr-[10px] ml-[9px]">120%</span>
        <button aria-label="缩小" className="flex size-[15px] items-center justify-center rounded-full border border-[#56709a] bg-[#eef4fc]">
          <i className="h-[2px] w-2 bg-[#3f5475]"></i>
        </button>
        <label className="flex">
          <span className="sr-only">显示比例</span>
          <input
            type="range"
            min="0"
            max="100"
            defaultValue="50"
            className="h-4 w-[104px] appearance-none bg-[linear-gradient(#e9f2fd,#e9f2fd)] bg-[length:100%_1px] bg-center bg-no-repeat [&::-webkit-slider-thumb]:h-3 [&::-webkit-slider-thumb]:w-[9px] [&::-webkit-slider-thumb]:appearance-none [&::-webkit-slider-thumb]:rounded-b-[4px] [&::-webkit-slider-thumb]:border [&::-webkit-slider-thumb]:border-[#56709a] [&::-webkit-slider-thumb]:bg-[#e3ecf8]"
          />
        </label>
        <button aria-label="放大" className="flex size-[15px] items-center justify-center rounded-full border border-[#56709a] bg-[#eef4fc]">
          <svg viewBox="0 0 8 8" className="size-2"><path d="M4 0v8M0 4h8" stroke="#3f5475" strokeWidth="2" /></svg>
        </button>
      </div>
    </footer>
  );
}

const apps: { name: string; icon: ReactNode }[] = [
  {
    name: "贝壳",
    icon: (
      <>
        <path d="M13 30L2 22Q-1 15 3 11 5 6 9 5q3-4 8-3 5-1 7 3 4 1 5 5 3 4 0 9L18 30z" fill="#fbd07e" stroke="#eba63e" />
        <path d="M15 29L3 14M15 29L9 6M15 29V3M15 29L22 5M15 29l13-18" stroke="#f0a94a" />
        <path d="M21 11l3 6 6 1-4 5 2 7-7-3-6 3 1-7-5-5 7-1z" fill="#f08324" stroke="#b9560e" />
        <circle cx="21" cy="21" r="1.500" fill="#ffd9a0" />
      </>
    ),
  },
  {
    name: "文本",
    icon: (
      <>
        <rect x="5" y="3" width="23" height="27" rx="2" fill="#eaf7fb" stroke="#b7d5e0" />
        <path d="M8 8h17M8 11.500h17M8 15h17M8 18.500h17M8 22h17M8 25.500h17" stroke="#2f8fb5" strokeWidth="2" />
      </>
    ),
  },
  {
    name: "64",
    icon: (
      <>
        <path d="M1 1h30v30H3l-2-2z" fill="#1d3fae" stroke="#0f2266" />
        <path d="M10 1h14v10H10z" fill="#dfe4ee" />
        <path d="M17 2h4v8h-4z" fill="#1d3fae" />
        <path d="M4 14h24v16H4z" fill="#fff" />
        <path d="M6 18.500h20M6 22.500h20M6 26.500h8" stroke="#c02a2a" />
        <text x="16" y="29" fontSize="8" fontFamily="Liberation Mono">64</text>
      </>
    ),
  },
  {
    name: "Genesis",
    icon: (
      <path
        d="M30 1l-2 5-4 3q-5-2-9 2L9 20q0 4 4 4h5l2-5h-4l2-5h10l-1 11-5 6H7l-5-5v-6L9 8q6-5 13-5z"
        fill="#d9251c"
        stroke="#8f120d"
        strokeLinejoin="round"
      />
    ),
  },
  {
    name: "P",
    icon: (
      <>
        <path d="M25 2H7v24l-4 4M7 6h8M2 30h6l3-11" fill="none" stroke="#2f8f4c" strokeWidth="1.500" />
        <path d="M13 7h12q6 1 5 8-2 8-10 8h-4l-2 7H9zM19 11l-2 7q6 1 6-4 0-3-4-3z" fill="#168a3d" />
      </>
    ),
  },
  {
    name: "钉钉",
    icon: (
      <>
        <circle cx="16" cy="16" r="15.500" fill="#2a98ea" />
        <path d="M8 7q8 5 16 7-1 4-4 6h3l-6 7 1-5h-3l1-3q-4-1-5-4l3 0q-4-2-5-5l3 0Q8 9 8 7z" fill="#fff" />
      </>
    ),
  },
  {
    name: "光绘",
    icon: (
      <>
        <path d="M1 10q2-8 9-7l3 6z" fill="#3ec2a2" stroke="#0d5a50" />
        <path d="M2 13l10-4v15L4 17z" fill="#574f7d" stroke="#1d1a38" />
        <ellipse cx="20" cy="18" rx="11" ry="11" fill="#0e6f72" stroke="#10204c" strokeWidth="2" />
        <ellipse cx="20" cy="17" rx="7" ry="6" fill="none" stroke="#32d3b0" strokeWidth="2" />
        <circle cx="19" cy="16" r="3" fill="#ffd83a" stroke="#0b3d3e" />
      </>
    ),
  },
  {
    name: "X",
    icon: (
      <>
        <path d="M2 2h8l20 28h-8z" fill="#7a0f84" stroke="#1b0020" />
        <path d="M30 2L19 14M13 19L3 31" stroke="#fff" strokeWidth="4" />
        <path d="M30 2L19 14M13 19L3 31" stroke="#111" strokeWidth="2" />
      </>
    ),
  },
];

function AppIcon({ children }: { children: ReactNode }) {
  return <svg viewBox="0 0 32 32" className="size-8">{children}</svg>;
}

function Taskbar() {
  const slot = "flex h-10 w-[58px] items-center justify-center rounded-[3px] border border-[#57513f] shadow-[inset_0_0_0_1px_rgba(255,255,255,0.45)]";
  return (
    <footer className="flex h-10 shrink-0 items-center border-t border-[#4d4a40] bg-[linear-gradient(90deg,#6b6a60_0%,#8c846e_3%,#b0a487_20%,#bfae8a_32%,#b5a987_42%,#8f9b79_48%,#a39c78_54%,#b3a27b_62%,#a0916f_72%,#867b66_80%,#766c5a_90%,#6b6353_100%)]">
      <button aria-label="开始菜单" className="mr-[9px] ml-2">
        <svg viewBox="0 0 38 38" className="size-[37px]">
          <defs>
            <radialGradient id="start" cx="50%" cy="90%" r="90%">
              <stop offset="0" stopColor="#5fd4f5" />
              <stop offset="0.5" stopColor="#1e6bb0" />
              <stop offset="1" stopColor="#6a9bb8" />
            </radialGradient>
          </defs>
          <circle cx="19" cy="19" r="18" fill="url(#start)" stroke="#1c3d5c" />
          <path d="M10 12q4-3 8-1l-2 7q-4-2-8 0z" fill="#f0662a" />
          <path d="M20 12q4 2 9-1l-2 8q-5 2-9 0z" fill="#8cc63e" />
          <path d="M8 20q4-2 8 0l-2 7q-4-2-8 0z" fill="#3fa3ea" />
          <path d="M18 21q4 2 8 0l-2 7q-4 2-8 0z" fill="#fcc62c" />
          <path d="M3 15a16 14 0 0 1 32 0Q19 20 3 15z" fill="#fff" opacity="0.25" />
        </svg>
      </button>
      <div className="flex gap-1 pl-[6px]">
        {apps.map((app) => (
          <button key={app.name} aria-label={app.name} className={clsx(slot, "bg-linear-to-br from-[#a29b89] to-[#d0c5ae]")}>
            <AppIcon>{app.icon}</AppIcon>
          </button>
        ))}
        <button aria-label="Word" className={clsx(slot, "bg-linear-to-b from-[#f2f0ea] to-[#d8d0bd]")}>
          <AppIcon>
            <path d="M2 5q0-3 4-4h20v22H2z" fill="#3768b0" stroke="#23477f" />
            <path d="M5 8q0-4 5-4h14v18H5z" fill="#dbe8f8" />
            <path d="M10 7l20 2-1 22-19-3z" fill="#fff" stroke="#90a4c6" />
            <text x="11" y="19" fontSize="12" fontWeight="bold" fontFamily="Liberation Sans" fill="#2b5299">W</text>
            <path d="M23 13h5M23 16h5M12 22l16 1M12 25l16 1" stroke="#3f6cb4" strokeWidth="1.500" />
          </AppIcon>
        </button>
      </div>

      <div className="ml-auto flex items-center text-white">
        <div className="mb-1 flex items-center">
          <span className="grid grid-cols-2 border border-black bg-white text-center text-[8px] leading-[7px] font-bold">
            <span className="w-[7px] text-black">M</span>
            <span className="w-[7px] text-black">S</span>
            <span className="bg-[#222] text-[#ffe600]">P</span>
            <span className="bg-[#c00] text-white">Y</span>
          </span>
          <span className="ml-1 flex w-4 flex-col text-[9px] leading-[9px]">
            <span>体</span>
            <span className="text-right">验</span>
          </span>
          <span className="ml-1 text-[15px] leading-4">中</span>
          <span className="ml-2 text-xs font-bold">·,</span>
          <svg viewBox="0 0 16 16" className="ml-2 size-4">
            <path d="M2 8h11v3q0 4-5 4t-6-4z" fill="#ffe21a" stroke="#222" />
            <path d="M3 7l2-6 2 6M1 6h5" fill="#d22" stroke="#a11" />
            <circle cx="11" cy="4" r="3" fill="#dff1ff" stroke="#222" />
            <path d="M4 11h8" stroke="#c22" strokeWidth="2" />
          </svg>
          <svg viewBox="0 0 16 16" className="ml-[3px] size-4">
            <path d="M0 1h10v4H0z" fill="#1b2d9a" />
            <path d="M0 5h11v9H0z" fill="#fff" />
            <path d="M1 7.500h8M1 9.500h8M1 11.500h8" stroke="#333" />
            <path d="M8 5l7 6h-4l2 4-2 1-2-4-1 1z" fill="#fff" stroke="#111" />
          </svg>
          <button aria-label="帮助" className="ml-2 flex size-[14px] items-center justify-center rounded-full border border-[#b5c3f5] bg-[#1b30b8] text-[10px] font-bold">
            ?
          </button>
          <svg viewBox="0 0 8 16" className="ml-[11px] h-4 w-2">
            <path d="M3 .5h4v3H3zM.5 2.500h4v3h-4z" fill="none" stroke="#fff" />
            <path d="M1 12h6l-3 3z" fill="#fff" />
          </svg>
        </div>
        <div className="flex items-center pt-[2px]">
          <svg viewBox="0 0 8 5" className="ml-3 h-[5px] w-2">
            <path d="M0 5h8L4 0z" fill="#fff" />
          </svg>
          <svg viewBox="0 0 16 16" className="ml-3 size-4">
            <path d="M1 5h3l4-4v13l-4-4H1z" fill="#fff" stroke="#555" strokeWidth="0.500" />
            <path d="M10 5q2 3 0 6M12 3q4 5 0 10" fill="none" stroke="#fff" />
          </svg>
          <svg viewBox="0 0 16 16" className="ml-2 size-4">
            <path d="M5 3h10v8H5zM7 14h6M10 11v3" fill="#555" stroke="#fff" strokeWidth="1.500" />
            <path d="M1 1v4h4V1M3 5v5" fill="none" stroke="#fff" />
          </svg>
          <svg viewBox="0 0 17 16" className="ml-2 h-4 w-[17px]">
            <path d="M1.500 1v14" stroke="#fff" strokeWidth="1.500" />
            <path d="M3 2q4-2 9 1v6q-5-2-9 0z" fill="#fff" />
            <circle cx="12" cy="11" r="4.500" fill="#d4261d" />
            <path d="M10 9l4 4M14 9l-4 4" stroke="#fff" strokeWidth="1.500" />
          </svg>
        </div>
        <div className="mr-2 ml-4 text-center text-xs leading-[18px]">
          <div>16:34</div>
          <div>2021/5/25</div>
        </div>
        <button aria-label="显示桌面" className="h-[39px] w-[14px] border border-[#4b463b] bg-linear-to-b from-[#a39c8c] to-[#6f6858]"></button>
      </div>
    </footer>
  );
}

export default function App() {
  const [tab, setTab] = useState("开始");
  return (
    <div className="relative flex h-screen w-full flex-col overflow-hidden bg-[#bfdbff] font-['Open_Sans','Noto_Sans_CJK_SC',sans-serif]">
      <OfficeOrb />
      <TitleBar />
      <TabRow active={tab} onSelect={setTab} />
      <Ribbon />
      <div className="flex min-h-0 flex-1">
        <div className="flex min-w-0 flex-1 flex-col">
          <Ruler />
          <div className="flex min-h-0 flex-1">
            <div className="w-[23px] shrink-0 bg-[#9bb9e1]"></div>
            <Document />
          </div>
        </div>
        <ScrollBar />
      </div>
      <StatusBar />
      <Taskbar />
    </div>
  );
}
